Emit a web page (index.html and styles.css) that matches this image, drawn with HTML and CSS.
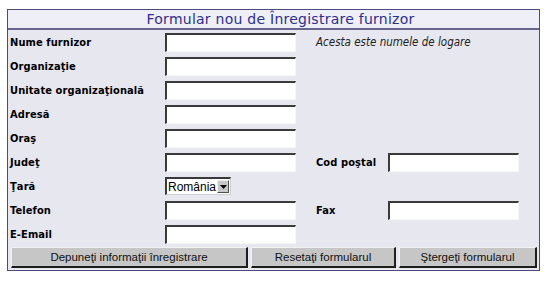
FILE: index.html
```html
<!DOCTYPE html>
<html lang="ro">
<head>
<meta charset="utf-8">
<title>Formular nou de Înregistrare furnizor</title>
<link rel="stylesheet" href="styles.css">
</head>
<body>
<form class="box">
  <div class="title">Formular nou de Înregistrare furnizor</div>
  <div class="grid">
    <label class="lbl">Nume furnizor</label>
    <div class="cell"><input class="field" type="text"></div>
    <div class="note">Acesta este numele de logare</div>

    <label class="lbl">Organizaţie</label>
    <div class="cell"><input class="field" type="text"></div>
    <div class="fill"></div>

    <label class="lbl">Unitate organizaţională</label>
    <div class="cell"><input class="field" type="text"></div>
    <div class="fill"></div>

    <label class="lbl">Adresă</label>
    <div class="cell"><input class="field" type="text"></div>
    <div class="fill"></div>

    <label class="lbl">Oraş</label>
    <div class="cell"><input class="field" type="text"></div>
    <div class="fill"></div>

    <label class="lbl">Judeţ</label>
    <div class="cell"><input class="field" type="text"></div>
    <label class="lbl">Cod poştal</label>
    <div class="cell"><input class="field" type="text"></div>

    <label class="lbl">Ţară</label>
    <div class="cell">
      <div class="select"><span class="sel-text">România</span><span class="sel-btn"><svg width="7" height="4" viewBox="0 0 7 4"><path d="M0 0H7L3.5 4Z" fill="#000"/></svg></span></div>
    </div>
    <div class="fill"></div>

    <label class="lbl">Telefon</label>
    <div class="cell"><input class="field" type="text"></div>
    <label class="lbl">Fax</label>
    <div class="cell"><input class="field" type="text"></div>

    <label class="lbl">E-Email</label>
    <div class="cell"><input class="field" type="text"></div>
    <div class="fill"></div>
  </div>
  <div class="buttons">
    <button type="button" class="btn">Depuneţi informaţii înregistrare</button>
    <button type="button" class="btn">Resetaţi formularul</button>
    <button type="button" class="btn">Ştergeţi formularul</button>
  </div>
</form>
</body>
</html>
```
FILE: styles.css
```css
html, body {
  margin: 0;
  padding: 0;
  background: #ffffff;
}
body {
  padding: 9px 0 0 7px;
}
.box {
  width: 531px;
  border: 1px solid #4b4b7d;
  background: #e7e7ef;
  margin: 0;
}
.title {
  height: 18px;
  padding-left: 14px;
  background: #efeff8;
  border-bottom: 2px solid #66668e;
  color: #2e2e8c;
  font-family: "DejaVu Sans", Verdana, sans-serif;
  font-size: 14px;
  letter-spacing: 0.25px;
  line-height: 18px;
  text-align: center;
}
.grid {
  display: grid;
  grid-template-columns: 155px 151px 72px 131px;
  grid-auto-rows: 24px;
  padding-left: 2px;
}
.lbl {
  font-family: "DejaVu Sans Condensed", "DejaVu Sans", Tahoma, sans-serif;
  font-weight: bold;
  font-size: 11px;
  letter-spacing: 0.1px;
  color: #000;
  display: flex;
  align-items: center;
}
.cell {
  display: flex;
  align-items: center;
}
.note {
  grid-column: 3 / 5;
  font-family: "DejaVu Sans Condensed", "DejaVu Sans", Tahoma, sans-serif;
  font-style: italic;
  font-size: 11.5px;
  color: #222;
  display: flex;
  align-items: center;
}
.fill {
  grid-column: 3 / 5;
}
.field {
  box-sizing: border-box;
  width: 131px;
  height: 19px;
  margin: 0;
  padding: 0 2px;
  background: #ffffff;
  border-style: solid;
  border-width: 2px 1px 1px 2px;
  border-color: #3a3a3a #f6f6f6 #f6f6f6 #3a3a3a;
}
.select {
  box-sizing: border-box;
  width: 66px;
  height: 18px;
  display: flex;
  align-items: center;
  background: #fff;
  border-style: solid;
  border-width: 2px 1px 1px 2px;
  border-color: #3a3a3a #d0d0d0 #d0d0d0 #3a3a3a;
  font-family: "Liberation Sans", Arial, sans-serif;
  font-size: 12px;
}
.sel-text {
  flex: 1;
  padding-left: 1px;
  line-height: 14px;
}
.sel-btn {
  width: 12px;
  height: 13px;
  margin-right: 1px;
  background: #c8c8c8;
  border: 1px solid;
  border-color: #f0f0f0 #505050 #505050 #f0f0f0;
  box-sizing: border-box;
  display: flex;
  align-items: center;
  justify-content: center;
}
.buttons {
  display: grid;
  grid-template-columns: 237px 145px 138px;
  column-gap: 3px;
  padding: 1px 0 2px 3px;
}
.btn {
  height: 21px;
  margin: 0;
  padding: 0;
  background: #c6c6c6;
  border-style: solid;
  border-width: 1px 2px 2px 1px;
  border-color: #f2f2f2 #1e1e1e #1e1e1e #f2f2f2;
  font-family: "Liberation Sans", Arial, sans-serif;
  font-size: 11.5px;
  color: #111;
}
```
